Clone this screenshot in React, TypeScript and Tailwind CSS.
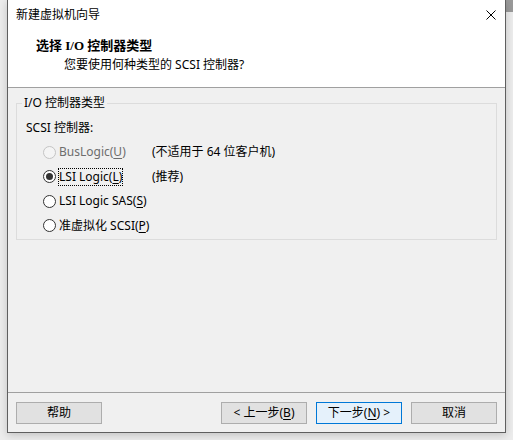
import React from 'react'

function Radio({ checked, disabled }: { checked?: boolean; disabled?: boolean }) {
  return (
    <span
      className={`flex h-[13px] w-[13px] shrink-0 items-center justify-center rounded-full border ${
        disabled ? 'border-[#c4c4c4] bg-[#f4f4f4]' : 'border-[#333333] bg-white'
      }`}
    >
      {checked && <span className="h-[7px] w-[7px] rounded-full bg-[#333333]" />}
    </span>
  )
}

function Option({
  label,
  mnemonic,
  note,
  checked,
  disabled,
  focused,
  className,
}: {
  label: string
  mnemonic: string
  note?: string
  checked?: boolean
  disabled?: boolean
  focused?: boolean
  className: string
}) {
  return (
    <div className={`flex items-center ${className}`}>
      <div className="flex w-[109px] items-center gap-[2px]">
        <Radio checked={checked} disabled={disabled} />
        <span
          className={`whitespace-nowrap border px-0 leading-[16px] ${
            focused ? 'border-dotted border-black' : 'border-transparent'
          } ${disabled ? 'text-[#6d6d6d]' : 'text-black'}`}
        >
          {label}(<span className="underline underline-offset-2">{mnemonic}</span>)
        </span>
      </div>
      {note && <span className="whitespace-nowrap text-black">{note}</span>}
    </div>
  )
}

function Button({ children, primary }: { children: React.ReactNode; primary?: boolean }) {
  return (
    <button
      className={`flex h-[22px] w-[86px] items-center justify-center border text-[12px] text-black ${
        primary ? 'border-[#0078d7] bg-[#e5f1fb]' : 'border-[#adadad] bg-[#e1e1e1]'
      }`}
    >
      {children}
    </button>
  )
}

export default function App() {
  return (
    <div className="relative h-[440px] w-[513px] overflow-hidden bg-[#ececec] font-['Noto_Sans','Noto_Sans_CJK_SC',sans-serif] text-[12px] text-black">
      <div className="absolute right-0 top-0 h-[12px] w-[8px] bg-[#9a9a9a]" />
      <div className="relative ml-[7px] flex h-[433px] w-[499px] flex-col border-x border-b border-[#5f5f5f] shadow-[0_2px_8px_rgba(0,0,0,0.18)]">
        <div className="flex h-[30px] items-center justify-between bg-white pl-2 pr-[8px]">
          <span className="leading-[16px]">新建虚拟机向导</span>
          <svg width="10" height="10" viewBox="0 0 10 10" className="mr-[1px]">
            <path d="M0.5 0.5 L9.5 9.5 M9.5 0.5 L0.5 9.5" stroke="#000" strokeWidth="1" />
          </svg>
        </div>

        <div className="flex h-[58px] flex-col border-b border-[#a0a0a0] bg-white pt-[8px]">
          <span className="pl-[28px] font-['Liberation_Serif','Noto_Sans_CJK_SC',serif] text-[13px] font-bold leading-[16px]">
            选择 I/O 控制器类型
          </span>
          <span className="mt-[3px] pl-[56px] leading-[16px]">您要使用何种类型的 SCSI 控制器?</span>
        </div>

        <div className="flex h-[304px] flex-col bg-[#f0f0f0] px-2 pt-[7px]">
          <fieldset className="h-[145px] border border-[#dcdcdc]">
            <legend className="ml-[5px] px-[2px] leading-[16px]">I/O 控制器类型</legend>
            <div className="flex flex-col pl-[9px] pt-[9px]">
              <span className="leading-[16px]">SCSI 控制器:</span>
              <div className="mt-[4px] flex flex-col pl-[17px]">
                <Option className="h-[24px]" label="BusLogic" mnemonic="U" note="(不适用于 64 位客户机)" disabled />
                <Option className="h-[25px]" label="LSI Logic" mnemonic="L" note="(推荐)" checked focused />
                <Option className="h-[24px]" label="LSI Logic SAS" mnemonic="S" />
                <Option className="h-[25px]" label="准虚拟化 SCSI" mnemonic="P" />
              </div>
            </div>
          </fieldset>
        </div>

        <div className="flex h-[40px] items-start justify-between border-t border-[#a0a0a0] bg-[#f0f0f0] px-2 pt-[9px]">
          <Button>帮助</Button>
          <div className="flex gap-[9px]">
            <Button>
              &lt; 上一步(<span className="underline underline-offset-2">B</span>)
            </Button>
            <Button primary>
              下一步(<span className="underline underline-offset-2">N</span>) &gt;
            </Button>
            <Button>取消</Button>
          </div>
        </div>
      </div>
    </div>
  )
}
